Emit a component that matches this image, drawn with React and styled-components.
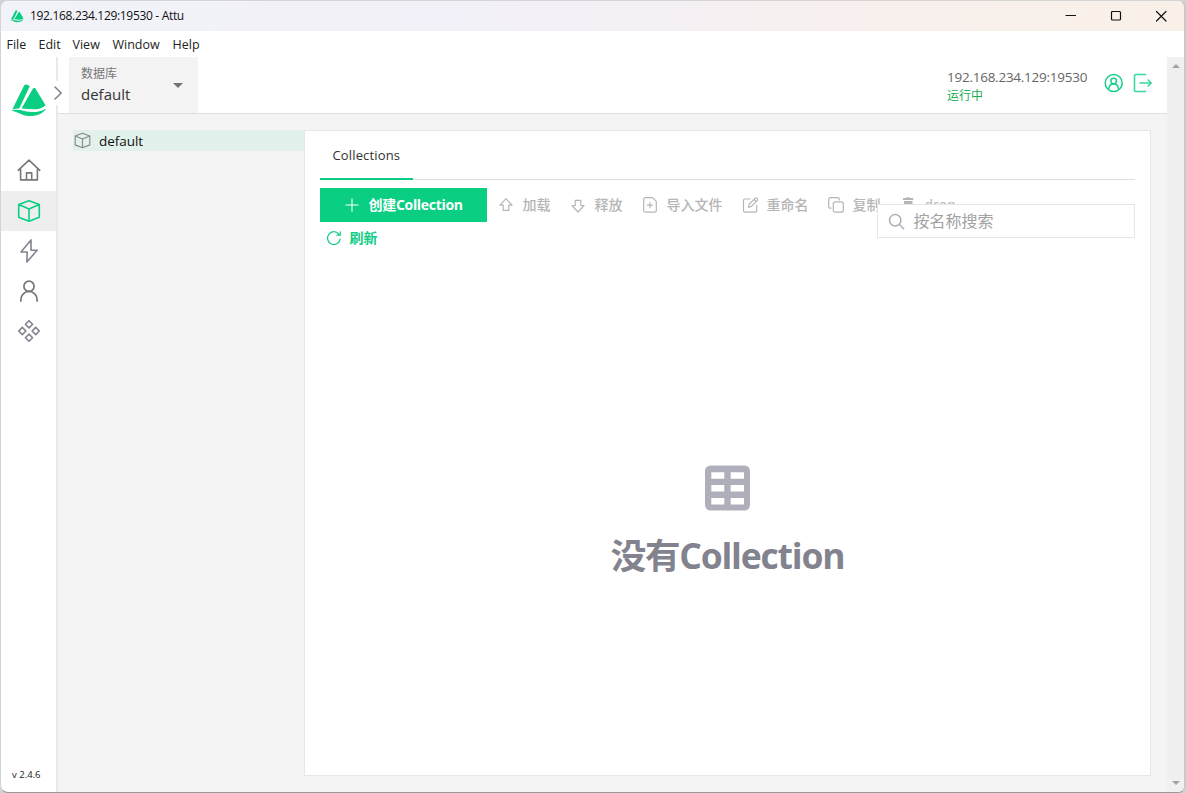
import React from "react";
import styled, { createGlobalStyle } from "styled-components";

const Global = createGlobalStyle`
  * { box-sizing: border-box; }
  body { margin: 0; background: #d2d2d2; overflow: hidden; }
  body, input, button { font-family: "Open Sans", "Noto Sans CJK SC", sans-serif; }
`;

const Window = styled.div`
  width: 1186px; height: 793px; display: flex; flex-direction: column;
  background: #fff; border: 1px solid #d4d4d4; border-right: 2px solid #c9c9c9;
  border-bottom-color: #999; border-radius: 8px; overflow: hidden;
`;
const TitleBar = styled.header`
  height: 30px; flex: none; display: flex; align-items: center; padding-left: 9px; color: #111;
  background: linear-gradient(90deg, #f1f3f9 0%, #f3f0f8 45%, #f8f0ed 75%, #f9f0e8 100%);
`;
const Text = styled.span`
  font-size: ${p => p.$size || 14}px; line-height: ${p => p.$line || 20}px;
  letter-spacing: ${p => p.$track || 0}px; font-weight: ${p => p.$weight || 400};
  color: ${p => p.$color || "inherit"}; white-space: nowrap;
`;
const WindowTitle = styled(Text)`flex: 1; margin-left: 6px;`;
const WindowControls = styled.div`display: flex; align-items: center; gap: 33px; margin-right: 16px;`;
const MenuBar = styled.nav`
  height: 26px; flex: none; display: flex; align-items: center; padding: 2px 0 0 5.5px; color: #222;
`;
const MenuItem = styled(Text)`width: ${p => p.$width}px;`;
const Body = styled.div`flex: 1; display: flex; min-height: 0;`;
const Sidebar = styled.aside`
  width: 57px; flex: none; display: flex; flex-direction: column; align-items: stretch;
  border-right: 2px solid #e9e9e9;
`;
const LogoArea = styled.div`height: 94px; padding: 25px 0 0 9px; position: relative;`;
const NavItem = styled.div`
  height: 40px; display: flex; align-items: center; justify-content: center;
  background: ${p => (p.$active ? "#eee" : "#fff")}; color: ${p => (p.$active ? "#0ace82" : "#82838e")};
`;
const Nav = styled.nav`display: flex; flex-direction: column;`;
const Expander = styled.div`
  position: absolute; left: 50px; top: 24px; width: 14px; height: 24px; background: #fff;
  display: flex; align-items: center; justify-content: center; z-index: 2;
`;
const Version = styled(Text)`margin: auto 0 7px 11px;`;
const Main = styled.main`flex: 1; display: flex; flex-direction: column; background: #f4f4f4; min-width: 0;`;
const TopBar = styled.div`
  height: 57px; flex: none; display: flex; background: #fff; border-bottom: 1px solid #dedede; padding-left: 11px;
`;
const DatabaseSelect = styled.div`
  width: 129px; height: 56px; background: #f3f3f3; display: flex; align-items: center;
  padding: 0 15px 0 12px; margin-right: auto;
`;
const Stack = styled.div`display: flex; flex-direction: column; flex: 1; padding-bottom: 2px;`;
const Connection = styled.div`width: 157px; display: flex; flex-direction: column; padding-top: 10px;`;
const Actions = styled.div`display: flex; gap: 9px; padding: 16px 14px 0 0; align-items: flex-start;`;
const Content = styled.div`flex: 1; display: flex; padding: 16px 16px 16px 15px; min-height: 0;`;
const Tree = styled.div`width: 231px; flex: none;`;
const TreeNode = styled.div`
  height: 21px; display: flex; align-items: center; gap: 8px; background: #e3f1ec; color: #111; padding-left: 1px;
`;
const Panel = styled.section`
  flex: 1; background: #fff; border: 1px solid #e7e7e7; padding: 0 15px; display: flex; flex-direction: column;
`;
const Tabs = styled.div`height: 49px; flex: none; border-bottom: 1px solid #dedede;`;
const Tab = styled.div`
  width: 92.5px; height: 49px; border-bottom: 2px solid #0ace82; padding: 12px 0 0 12.5px; color: #323232;
`;
const Toolbar = styled.div`position: relative; display: flex; flex-wrap: wrap; align-items: center; padding-top: 8px;`;
const CreateButton = styled.button`
  width: 166.5px; height: 34px; border: 0; background: #0ace82; color: #fff; padding: 0 0 0 24.5px;
  display: flex; align-items: center; gap: 10px; margin-right: 11px;
`;
const ToolButton = styled.button`
  height: 34px; padding: 0; border: 0; background: none; display: flex; align-items: center; gap: 9px;
  margin-right: 19px; color: #b5b5b5;
`;
const RefreshButton = styled(ToolButton)`height: 32px; margin-left: 6px; gap: 7.5px; color: #12cd86;`;
const Break = styled.div`flex-basis: 100%;`;
const Search = styled.div`
  position: absolute; right: 0; top: 24px; width: 258.5px; height: 34px; background: #fff;
  border: 1px solid #e6e6ea; display: flex; align-items: center; gap: 9px; padding-left: 10px;
`;
const Empty = styled.div`
  flex: 1; display: flex; flex-direction: column; align-items: center; padding-top: 211px; gap: 19px;
`;
const ScrollBar = styled.div`
  width: 17px; background: #f0f0f0; display: flex; flex-direction: column; justify-content: space-between;
  align-items: center; padding: 7px 0;
`;
const Line = styled.svg.attrs({ fill: "none", stroke: "currentColor" })`
  flex: none; display: block; stroke-linecap: round; stroke-linejoin: round;
  color: ${p => p.$color || "inherit"};
`;

const Logo = ({ width, height }) => (
  <svg width={width} height={height} viewBox="0 0 37 35" fill="#0ace82">
    <path d="M2.3 27.5 14.1 3.6Q16.1 1 19.8 4.2L9.2 26.5q-3.7-.2-6.9 1z" />
    <path d="M11.5 26.4 23 6.6q1.2-1.6 2.4 0L35.6 23.2q-4.5 4-10.5 4-6.5-.2-13.6-.8z" />
    <path d="M.6 28.8q6.5-1.9 12.5 0c8 2.2 15.5 1.8 23.5-2.4-4.5 5.8-11 7.9-18 7.7-7.8-.4-11-5-18-5.3z" />
  </svg>
);
const Cube = ({ size, color, weight = 1.6 }) => (
  <Line width={size} height={size} viewBox="0 0 24 24" strokeWidth={weight} $color={color}>
    <path d="M12 1.7 22.3 5.6v12.6L12 22.3 1.7 18.2V5.6zM1.7 5.6 12 10l10.3-4.4M12 10v12.3" />
  </Line>
);
const Home = () => (
  <Line width="24" height="24" viewBox="0 0 24 24" strokeWidth="1.6" $color="#777">
    <path d="M1.2 11.3 12 1.2l10.8 10.1M3.6 10v10.9h16.8V10M9.5 20.9v-7h5.2v7" />
  </Line>
);
const Bolt = () => (
  <Line width="24" height="24" viewBox="0 0 24 24" strokeWidth="1.6">
    <path d="M14 .9 4 13h6.2L9.9 23 20.2 11.2H14z" />
  </Line>
);
const Person = () => (
  <Line width="24" height="24" viewBox="0 0 24 24" strokeWidth="1.7" $color="#777">
    <circle cx="12" cy="7.2" r="5.1" />
    <path d="M3.9 21.9v-1.4a8.1 8.1 0 0 1 16.2 0v1.4" />
  </Line>
);
const Diamonds = () => (
  <Line width="24" height="24" viewBox="0 0 24 24" strokeWidth="1.6">
    <path d="m12 1.7 3.6 3.6L12 8.9 8.4 5.3zM12 15.1l3.6 3.6-3.6 3.6-3.6-3.6zM5.3 8.4 8.9 12l-3.6 3.6L1.7 12zM18.7 8.4l3.6 3.6-3.6 3.6-3.6-3.6z" />
  </Line>
);
const Small = ({ children, weight = 1.2, size = 16 }) => (
  <Line width={size} height={size} viewBox="0 0 16 16" strokeWidth={weight}>{children}</Line>
);
const Triangle = ({ up, size = 10 }) => (
  <svg width={size} height={size / 2} viewBox="0 0 10 5" fill={size > 9 ? "#737373" : "#a3a3a3"}>
    <path d={up ? "M0 5 5 0l5 5z" : "M0 0h10L5 5z"} />
  </svg>
);

const tools = [
  { label: "加载", icon: <Small><path d="M8 1.7 14 8.2h-3.2v5.2H5.2V8.2H2z" /></Small> },
  { label: "释放", icon: <Small><path d="m8 15 6-6.5h-3.2V3.3H5.2v5.2H2z" /></Small> },
  { label: "导入文件", icon: <Small><path d="M3.4.7h7.2l3.7 3.7v9a1.8 1.8 0 0 1-1.8 1.8h-9a1.8 1.8 0 0 1-1.8-1.8V2.5A1.8 1.8 0 0 1 3.4.7zM8 5.6v5.2M5.4 8.2h5.2" /></Small> },
  { label: "重命名", icon: <Small><path d="M8 2H2.9C2 2 1.5 2.6 1.5 3.4v10.4c0 .8.6 1.4 1.4 1.4h10.4c.8 0 1.4-.6 1.4-1.4V8.4M6.5 10.3l.7-3.1 6-5.9c1.4-1 3.2.7 2.1 2.1L9.5 9.4zM12.1 2.5l2.1 2.1" /></Small> },
  { label: "复制", icon: <Small><rect x="5.3" y="4.9" width="10" height="10.3" rx="2" /><path d="M3 11.2h-.7a1.6 1.6 0 0 1-1.6-1.6V2.3A1.6 1.6 0 0 1 2.3.7h7.4a1.6 1.6 0 0 1 1.6 1.6V3" /></Small> },
  { label: "drop", icon: <Small><path fill="currentColor" stroke="none" d="M3 1h3l.6-.8h3l.6.8h3v2H3zM4 4h8.5v10H4z" /></Small> },
];
const menus = [["File", 32], ["Edit", 34], ["View", 40], ["Window", 60], ["Help", 40]];

export default function App() {
  return (
    <>
      <Global />
      <Window>
        <TitleBar>
          <Logo width={14} height={14} />
          <WindowTitle $size={12} $track={-0.32}>192.168.234.129:19530 - Attu</WindowTitle>
          <WindowControls>
            <Line width="12" height="12" strokeWidth="1.2"><path d="M1 5.5h9.5" /></Line>
            <Line width="12" height="12" strokeWidth="1.2"><rect x="1.5" y="1.5" width="9" height="8.5" rx="1" /></Line>
            <Line width="13" height="13" strokeWidth="1.2"><path d="m1.5 1.5 9.5 9.5m0-9.5-9.5 9.5" /></Line>
          </WindowControls>
        </TitleBar>
        <MenuBar>
          {menus.map(([m, w]) => <MenuItem key={m} $size={12.5} $width={w}>{m}</MenuItem>)}
        </MenuBar>
        <Body>
          <Sidebar>
            <LogoArea>
              <Logo width={37} height={35} />
              <Expander>
                <Line width="10" height="16" strokeWidth="1.6" $color="#82838e"><path d="m2 2 6.2 6L2 14" /></Line>
              </Expander>
            </LogoArea>
            <Nav>
              <NavItem><Home /></NavItem>
              <NavItem $active><Cube size={24} /></NavItem>
              <NavItem><Bolt /></NavItem>
              <NavItem><Person /></NavItem>
              <NavItem><Diamonds /></NavItem>
            </Nav>
            <Version $size={9.5} $color="#222">v 2.4.6</Version>
          </Sidebar>
          <Main>
            <TopBar>
              <DatabaseSelect>
                <Stack>
                  <Text $size={12} $color="#777">数据库</Text>
                  <Text $size={15} $line={20} $color="#333">default</Text>
                </Stack>
                <Triangle />
              </DatabaseSelect>
              <Connection>
                <Text $size={13.5} $track={-0.25} $color="#666">192.168.234.129:19530</Text>
                <Text $size={12} $line={18} $color="#20ac52">运行中</Text>
              </Connection>
              <Actions>
                <Line width="20" height="20" viewBox="0 0 20 20" strokeWidth="1.5" $color="#18d08a">
                  <circle cx="9.7" cy="10" r="8.5" /><circle cx="9.7" cy="8" r="2.8" /><path d="M5 15.5c.3-6 9.1-6 9.4 0" />
                </Line>
                <Line width="20" height="20" viewBox="0 0 20 20" strokeWidth="1.6" $color="#3bd89c">
                  <path d="M12.5 1.5H2.5q-1 0-1 1v15q0 1 1 1h10M7 10h11.2M15.2 7l3 3-3 3" />
                </Line>
              </Actions>
            </TopBar>
            <Content>
              <Tree>
                <TreeNode><Cube size={17} color="#888" /><Text $size={13.5} $track={-0.05}>default</Text></TreeNode>
              </Tree>
              <Panel>
                <Tabs><Tab><Text $size={13} $track={0.15}>Collections</Text></Tab></Tabs>
                <Toolbar>
                  <CreateButton>
                    <Small weight={1.2} size={14}><path d="M8 1v14M1 8h14" /></Small>
                    <Text $size={14} $weight={700} $track={-0.3}>创建Collection</Text>
                  </CreateButton>
                  {tools.map(t => <ToolButton key={t.label}>{t.icon}<Text $weight={500}>{t.label}</Text></ToolButton>)}
                  <Break />
                  <RefreshButton>
                    <Small weight={1.2}><path d="M14.2 9.2A6.4 6.4 0 1 1 12.8 4M14.3 1.8v3.4h-3.4" /></Small>
                    <Text $weight={700}>刷新</Text>
                  </RefreshButton>
                  <Search>
                    <Line width="17" height="17" viewBox="0 0 17 17" strokeWidth="1.5" $color="#aeaebb">
                      <circle cx="7.2" cy="7.2" r="5.7" /><path d="m11.5 11.5 4.2 4.2" />
                    </Line>
                    <Text $size={16} $line={24} $color="#a2a2a2">按名称搜索</Text>
                  </Search>
                </Toolbar>
                <Empty>
                  <svg width="46" height="46" viewBox="0 0 46 46">
                    <path fillRule="evenodd" fill="#afafbc" d="M5.5 .5h34a5.5 5.5 0 0 1 5.5 5.5v34a5.5 5.5 0 0 1-5.5 5.5h-34A5.5 5.5 0 0 1 0 40V6A5.5 5.5 0 0 1 5.5 .5zM6.3 7.3v6.4h13V7.3zm19.4 0v6.4H39V7.3zM6.3 20v6.4h13V20zm19.4 0v6.4H39V20zM6.3 33v6.4h13V33zm19.4 0v6.4H39V33z" />
                  </svg>
                  <Text $size={35.5} $line={50} $weight={700} $track={-1.2} $color="#82838e">没有Collection</Text>
                </Empty>
              </Panel>
            </Content>
          </Main>
          <ScrollBar><Triangle up size={8} /><Triangle size={8} /></ScrollBar>
        </Body>
      </Window>
    </>
  );
}
